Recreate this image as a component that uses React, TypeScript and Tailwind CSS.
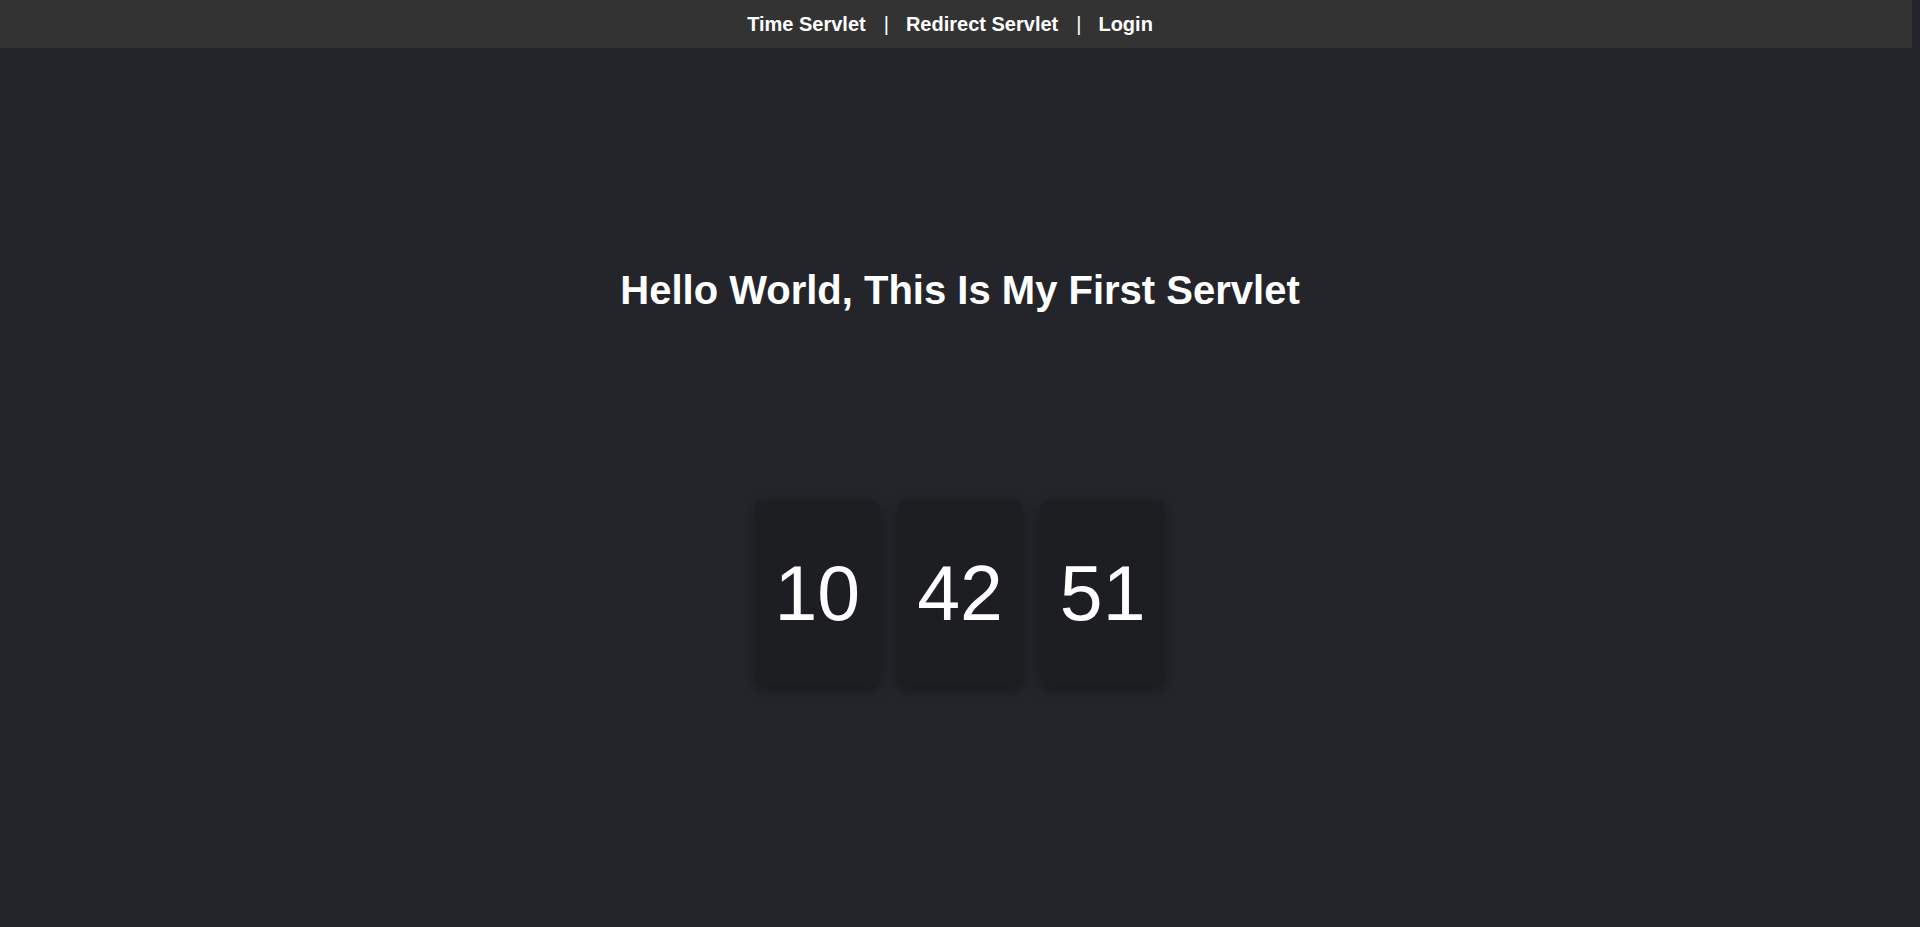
export default function App() {
  const links = ['Time Servlet', 'Redirect Servlet', 'Login']
  const time = ['10', '42', '51']

  return (
    <div className="min-h-[927px] bg-[#24252a] font-['Liberation_Sans',Arial,sans-serif] text-white">
      <nav className="flex h-12 w-[1912px] items-center justify-center bg-[#333333] pr-3">
        {links.map((link, i) => (
          <div key={link} className="flex items-center">
            {i > 0 && <span className="ml-[18px] mr-[17px] text-[20px]">|</span>}
            <a href="#" className="text-[20px] font-bold text-white">
              {link}
            </a>
          </div>
        ))}
      </nav>

      <h1 className="mt-[219px] text-center text-[40px] font-bold leading-[46px]">
        Hello World, This Is My First Servlet
      </h1>

      <div className="mt-[187px] flex justify-center gap-[17px]">
        {time.map((t, i) => (
          <div
            key={i}
            className="rounded-[10px] bg-[#1d1e22] px-5 py-12 text-[77px] leading-[90px] shadow-[0_4px_14px_rgba(0,0,0,0.35)]"
          >
            {t}
          </div>
        ))}
      </div>
    </div>
  )
}
